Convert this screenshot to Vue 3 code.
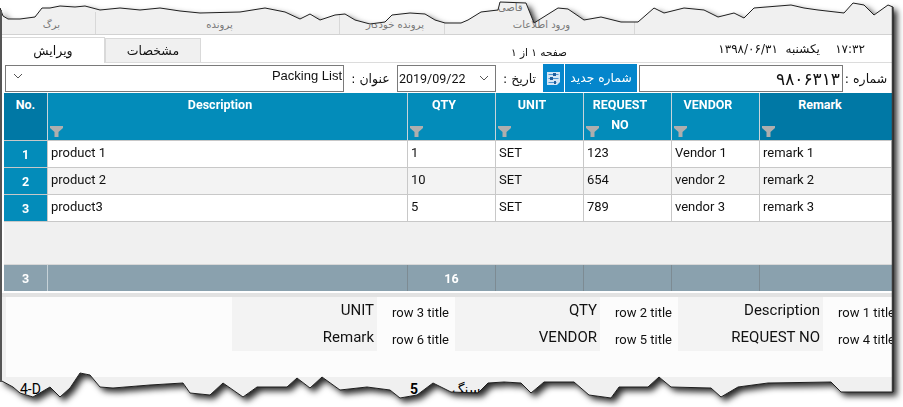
<script setup>
import { computed } from 'vue'

const top = [[0,8],[3,16],[8,19],[20,19],[35,17],[42,8],[50,8],[60,6],[75,7],[85,6],[100,10],[120,8],[140,10],[160,8],[180,11],[200,13],[240,12],[265,8],[285,12],[300,19],[310,14],[320,20],[335,15],[345,14],[355,20],[370,24],[385,22],[392,15],[410,13],[425,14],[435,20],[445,23],[461,23],[468,20],[481,12],[498,10],[500,2],[526,3],[534,23],[558,8],[568,9],[584,20],[601,17],[621,22],[638,22],[654,8],[664,13],[684,8],[704,10],[718,17],[734,13],[744,18],[754,8],[791,5],[804,8],[818,10],[844,13],[853,3],[864,5],[874,15],[888,5],[893,7]]
const bottom = [[893,392],[841,392],[831,382],[768,383],[738,387],[721,397],[711,388],[671,387],[659,377],[648,387],[619,387],[611,398],[589,395],[574,382],[544,382],[531,393],[521,383],[504,382],[488,383],[478,393],[451,392],[433,383],[417,395],[400,398],[390,390],[367,387],[340,390],[322,377],[310,388],[297,378],[287,387],[257,387],[243,397],[223,383],[210,395],[190,393],[183,383],[150,385],[113,388],[100,387],[90,375],[80,373],[70,388],[60,397],[50,387],[33,397],[20,393],[13,387],[0,380]]
const outline = [...top, ...bottom]
const clipStyle = computed(() => ({
  clipPath: `polygon(${outline.map(([x, y]) => `${x}px ${y}px`).join(',')})`
}))
const outlinePoints = [...outline, outline[0]].map(p => p.join(',')).join(' ')

const columns = ['Description', 'QTY', 'UNIT', 'REQUEST NO', 'VENDOR', 'Remark']
const rows = [
  { no: 1, cells: ['product 1', '1', 'SET', '123', 'Vendor 1', 'remark 1'] },
  { no: 2, cells: ['product 2', '10', 'SET', '654', 'vendor 2', 'remark 2'] },
  { no: 3, cells: ['product3', '5', 'SET', '789', 'vendor 3', 'remark 3'] }
]
const totals = ['', '16', '', '', '', '']
const fields = [
  { label: 'UNIT', value: 'row 3 title' },
  { label: 'QTY', value: 'row 2 title' },
  { label: 'Description', value: 'row 1 title' },
  { label: 'Remark', value: 'row 6 title' },
  { label: 'VENDOR', value: 'row 5 title' },
  { label: 'REQUEST NO', value: 'row 4 title' }
]
</script>

<template>
  <div class="stage">
    <div class="shadow">
      <div class="sheet" :style="clipStyle">
        <nav class="nav">
          <span class="nav-item w96">برگ</span>
          <span class="nav-item w244">پرونده</span>
          <span class="nav-item w105">پرونده خودکار</span>
          <span class="nav-item w190">ورود اطلاعات</span>
          <span class="nav-rest"></span>
          <span class="nav-peak">قاصی</span>
        </nav>

        <div class="tabs">
          <div class="tab active">ویرایش</div>
          <div class="tab">مشخصات</div>
          <div class="page-no">صفحه ۱ از ۱</div>
          <div class="clock">۱۷:۳۲ &nbsp;&nbsp; یکشنبه &nbsp;۱۳۹۸/۰۶/۳۱</div>
        </div>

        <div class="toolbar">
          <div class="box title-box">
            <svg class="chev" width="10" height="6" viewBox="0 0 10 6"><path d="M1 1l4 4 4-4" fill="none" stroke="#555" /></svg>
            <span>Packing List</span>
          </div>
          <label class="lbl lbl-title">عنوان :</label>
          <div class="box date-box">
            <span>2019/09/22</span>
            <svg class="chev" width="10" height="6" viewBox="0 0 10 6"><path d="M1 1l4 4 4-4" fill="none" stroke="#555" /></svg>
          </div>
          <label class="lbl lbl-date">تاریخ :</label>
          <button class="icon-btn" type="button" aria-label="تنظیمات">
            <svg width="13" height="13" viewBox="0 0 13 13">
              <path d="M0 0h13v10l-3 3H0z" fill="#d5e6f5" />
              <path d="M1.5 2.5h10M1.5 6.5h10M1.5 10.5h8" stroke="#4f93cf" stroke-width="1" />
              <path d="M6 1h3v3H6zM3 5h3v3H3zM7 9h2v3H7z" fill="#1f5f9e" />
            </svg>
          </button>
          <button class="new-btn" type="button">شماره جدید</button>
          <div class="box number-box">۹۸۰۶۳۱۳</div>
          <label class="lbl lbl-num">شماره :</label>
        </div>

        <div class="table">
          <div class="tr head">
            <div class="th no dark">No.</div>
            <div v-for="(c, i) in columns" :key="c" class="th" :class="{ dark: i === 5 }">
              <span class="th-text">{{ c }}</span>
              <svg class="funnel" width="14" height="11" viewBox="0 0 14 11">
                <path d="M0 0h13v2L8.5 6v5h-4V6L0 2z" fill="#aeaeae" />
              </svg>
            </div>
          </div>
          <div v-for="r in rows" :key="r.no" class="tr body" :class="{ even: r.no === 2 }">
            <div class="td no">{{ r.no }}</div>
            <div v-for="(c, i) in r.cells" :key="i" class="td">{{ c }}</div>
          </div>
          <div class="spacer"></div>
          <div class="tr foot">
            <div class="tf no">3</div>
            <div v-for="(c, i) in totals" :key="i" class="tf">{{ c }}</div>
          </div>
        </div>

        <div class="band"></div>

        <div class="panel">
          <div class="panel-grid">
            <div class="blank"></div>
            <template v-for="(f, i) in fields" :key="f.label">
              <div v-if="i === 3" class="blank"></div>
              <div class="f-label">{{ f.label }}</div>
              <div class="f-value">{{ f.value }}</div>
            </template>
          </div>
        </div>

        <div class="strip">
          <span class="s1">4-D</span>
          <span class="s2">5</span>
          <span class="s3">سنگ</span>
        </div>
      </div>
    </div>
    <svg class="edge" width="903" height="407" viewBox="0 0 903 407">
      <polyline :points="outlinePoints" fill="none" stroke="#1e1e1e" stroke-width="1" />
      <path d="M1 10V382" stroke="#555" stroke-width="2" />
      <path d="M892.5 7V392" stroke="#3a3a3a" stroke-width="1.5" />
    </svg>
  </div>
</template>

<style>
html, body { margin: 0; background: #fff; }
</style>

<style scoped>
.stage {
  position: relative;
  width: 903px;
  height: 407px;
  overflow: hidden;
  background: #fff;
  font-family: Roboto, "DejaVu Sans", sans-serif;
  color: #111;
}
.shadow {
  width: 893px;
  height: 407px;
  filter: drop-shadow(4px 4px 3px rgba(0, 0, 0, .85));
}
.sheet {
  width: 893px;
  height: 407px;
  background: #fff;
  display: flex;
  flex-direction: column;
  position: relative;
  overflow: hidden;
}
.edge { position: absolute; left: 0; top: 0; pointer-events: none; }

.nav {
  height: 34px;
  flex: none;
  display: flex;
  background: #f0f0f0;
  border-bottom: 1px solid #d2d2d2;
  position: relative;
  font-family: "DejaVu Sans", sans-serif;
  font-size: 10px;
  color: #777;
}
.nav-item {
  display: flex;
  align-items: flex-end;
  justify-content: center;
  padding-bottom: 4px;
  border-right: 1px solid #d8d8d8;
  box-sizing: border-box;
  margin-top: 12px;
}
.w96 { width: 96px; padding-left: 8px; }
.w244 { width: 244px; padding-left: 4px; }
.w105 { width: 105px; padding-left: 6px; }
.w190 { width: 190px; padding-left: 4px; }
.nav-rest { flex: 1; }
.nav-peak { position: absolute; left: 498px; top: 2px; }

.tabs {
  height: 28px;
  flex: none;
  display: flex;
  align-items: flex-end;
  border-bottom: 1px solid #dcdcdc;
  padding-left: 1px;
  box-sizing: border-box;
  font-family: "DejaVu Sans", sans-serif;
  font-size: 12.5px;
  position: relative;
}
.tab {
  width: 96px;
  height: 24px;
  background: #f0f0f0;
  border: 1px solid #d9d9d9;
  border-bottom: none;
  box-sizing: border-box;
  display: flex;
  align-items: center;
  justify-content: center;
}
.tab.active {
  width: 104px;
  height: 26px;
  background: #fff;
  margin-bottom: -1px;
}
.page-no { margin-left: 288px; margin-bottom: 4px; width: 100px; text-align: center; font-size: 10.5px; white-space: nowrap; }
.clock { margin-left: 120px; margin-bottom: 6px; width: 156px; direction: rtl; text-align: right; font-size: 12px; white-space: nowrap; }

.toolbar {
  height: 30px;
  flex: none;
  display: flex;
  align-items: center;
  padding: 0 0 0 5px;
  box-sizing: border-box;
  font-size: 12.5px;
}
.box {
  height: 27px;
  border: 1px solid #7a7a7a;
  box-sizing: border-box;
  background: #fff;
  display: flex;
  align-items: center;
  justify-content: space-between;
  flex: none;
}
.title-box { width: 339px; padding: 0 1px 5px 7px; font-family: "Liberation Sans", sans-serif; font-size: 13px; }
.date-box { width: 99px; padding: 0 6px 0 1px; }
.number-box {
  width: 204px;
  justify-content: flex-end;
  padding: 2px 2px 0 0;
  font-family: "DejaVu Sans", sans-serif;
  font-size: 17px;
}
.lbl { font-family: "DejaVu Sans", sans-serif; font-size: 12.5px; flex: none; text-align: center; direction: rtl; white-space: nowrap; }
.lbl-title { width: 53px; }
.lbl-date { width: 47px; }
.lbl-num { width: 46px; }
.icon-btn, .new-btn {
  height: 28px;
  border: none;
  background: #0486cc;
  padding: 0;
  color: #fff;
  flex: none;
  font-family: "DejaVu Sans", sans-serif;
}
.icon-btn { width: 21px; display: flex; align-items: center; justify-content: center; }
.new-btn { width: 72px; margin: 0 2px 0 1px; font-size: 12.3px; }

.table { flex: none; margin-left: 4px; width: 888px; }
.tr {
  display: grid;
  grid-template-columns: 44px 360px 88px 88px 88px 88px 132px;
}
.head { height: 48px; background: #038cba; color: #fff; font-weight: 700; font-size: 12.5px; border-bottom: 1px solid #c8c8c8; box-sizing: border-box; }
.th {
  position: relative;
  border-right: 1px solid #c8d4da;
  text-align: center;
  padding: 2px 15px 0 0;
  line-height: 20px;
  box-sizing: border-box;
}
.th.no { padding-right: 0; }
.th:last-child { border-right: none; padding-right: 12px; }
.th.dark { background: #0078a5; }
.th-text { display: block; }
.funnel { position: absolute; left: 2px; bottom: 3px; }
.body { height: 27px; font-size: 13px; border-bottom: 1px solid #c8c8c8; box-sizing: border-box; background: #fff; }
.body.even { background: #f3f3f3; }
.td {
  border-right: 1px solid #c8c8c8;
  padding: 0 3px 3px;
  display: flex;
  align-items: center;
  box-sizing: border-box;
}
.td.no {
  background: #038cba;
  color: #fff;
  font-weight: 700;
  justify-content: center;
  font-size: 12.5px;
  padding-bottom: 0;
}
.spacer { height: 43px; background: #f0f0f0; border-bottom: 1px solid #d8d8d8; box-sizing: border-box; }
.foot { height: 26px; background: #8aa1ae; color: #fff; font-weight: 700; font-size: 12.5px; }
.tf {
  border-right: 1px solid #7d8b93;
  display: flex;
  align-items: center;
  justify-content: center;
  box-sizing: border-box;
}
.tf.no { border-right-color: #c6d2d8; }
.tf:last-child { border-right: none; }

.band { height: 4px; margin-top: 2px; background: #e2e2e2; flex: none; }
.panel { flex: none; height: 80px; background: #f0f0f0; padding-left: 6px; }
.panel-grid {
  height: 80px;
  background: #fcfcfc;
  display: grid;
  grid-template-columns: 226px 145px 78px 145px 78px 145px 78px;
  grid-template-rows: 27px 27px;
  overflow: hidden;
}
.f-label {
  background: #f3f3f3;
  text-align: right;
  padding-right: 3px;
  font-size: 15px;
  line-height: 26px;
  white-space: nowrap;
}
.f-value { text-align: right; padding-right: 6px; font-size: 13px; line-height: 31px; white-space: nowrap; }

.strip { flex: 1; background: #f0f0f0; position: relative; display: flex; font-size: 14px; color: #000; padding-top: 4px; }
.s1 { margin-left: 20px; }
.s2 { margin-left: 369px; font-weight: 700; }
.s3 { margin-left: 34px; font-family: "DejaVu Sans", sans-serif; text-decoration: underline; }
.chev { flex: none; }
</style>
